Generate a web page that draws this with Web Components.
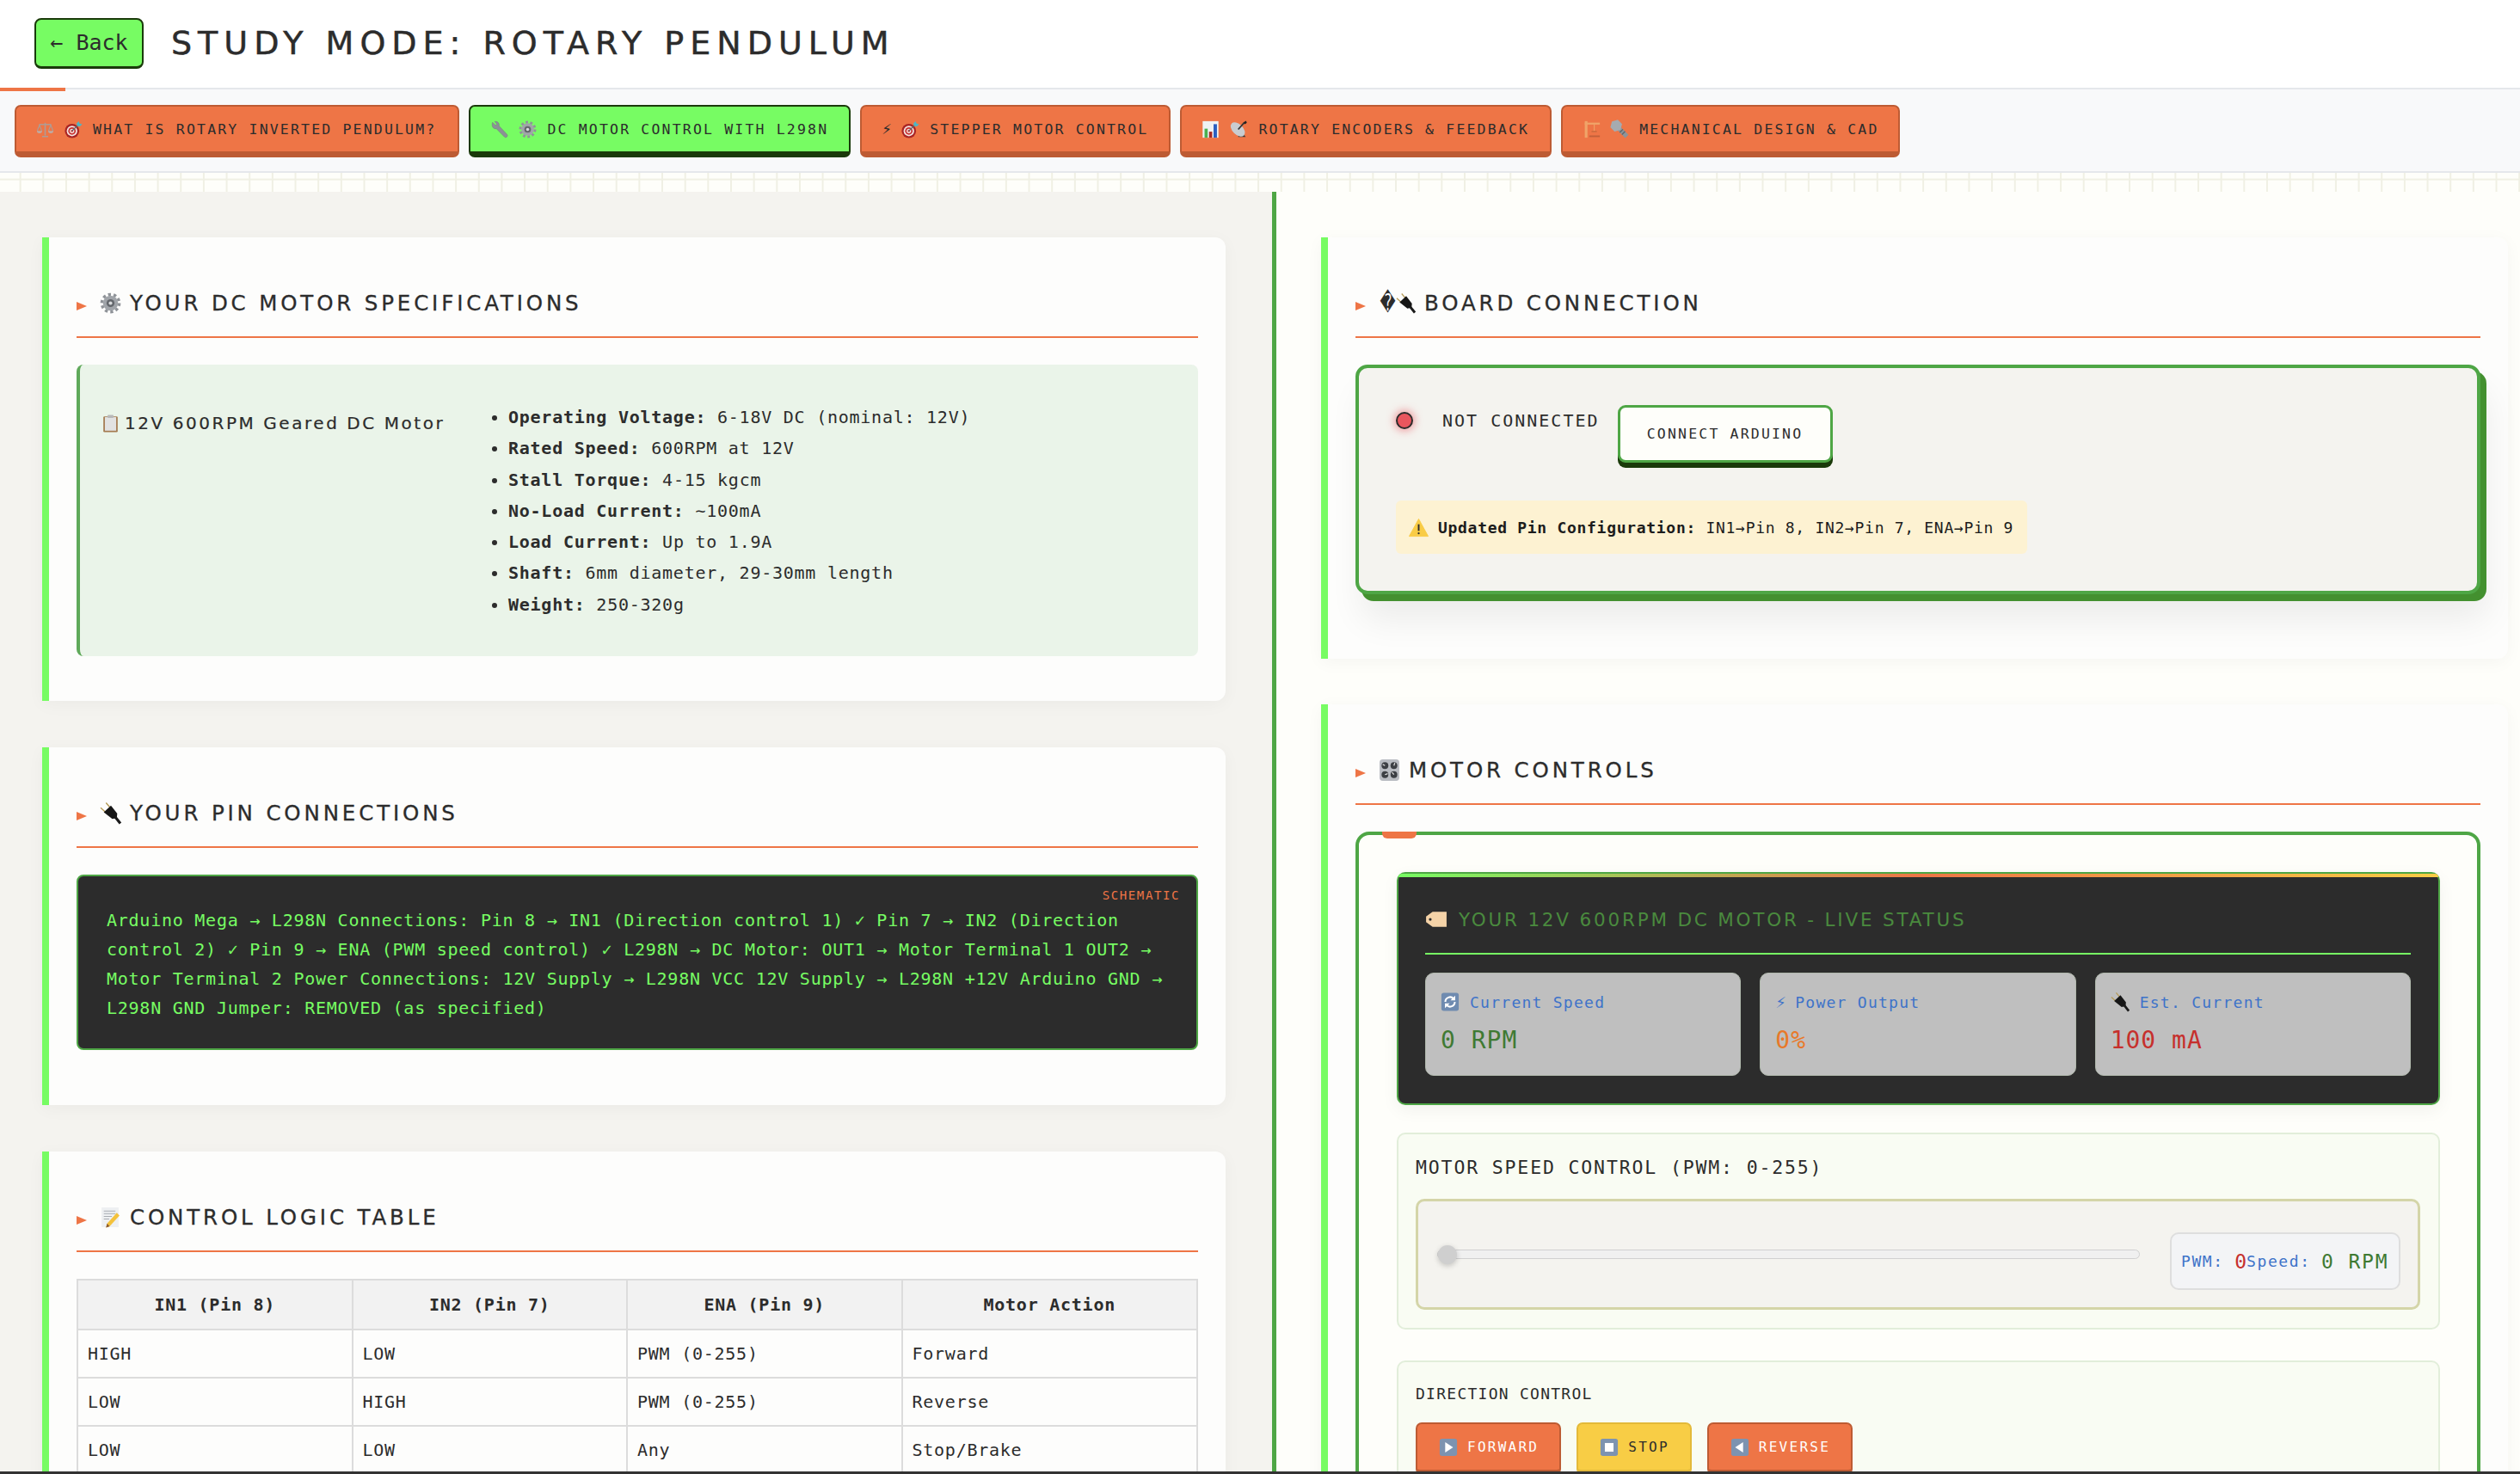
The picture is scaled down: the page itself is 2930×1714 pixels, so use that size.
<!DOCTYPE html>
<html lang="en">
<head>
<meta charset="utf-8">
<title>Study Mode: Rotary Pendulum</title>
<style>
  html, body { margin: 0; padding: 0; }
  body {
    height: 1714px;
    overflow: hidden;
    background: #fefefa;
    color: #2c2c2c;
    font-family: "DejaVu Sans Mono", "Liberation Mono", monospace;
    --display: "DejaVu Sans", "Liberation Sans", sans-serif;
    --green: #77fc63;
    --green-mid: #4ea645;
    --green-dark: #1a3a0a;
    --orange: #ee7546;
    --orange-dark: #bd5b33;
  }
</style>
</head>
<body>
<study-page>
  <study-header slot="header" title="STUDY MODE: ROTARY PENDULUM"></study-header>
  <tab-bar slot="tabs">
    <study-tab style="padding-right:25px"><emoji-icon name="scales"></emoji-icon><emoji-icon name="dart"></emoji-icon>WHAT IS ROTARY INVERTED PENDULUM?</study-tab>
    <study-tab active><emoji-icon name="wrench"></emoji-icon><emoji-icon name="gear"></emoji-icon>DC MOTOR CONTROL WITH L298N</study-tab>
    <study-tab><span class="bolt">⚡</span><emoji-icon name="dart"></emoji-icon>STEPPER MOTOR CONTROL</study-tab>
    <study-tab><emoji-icon name="chart"></emoji-icon><emoji-icon name="dish"></emoji-icon>ROTARY ENCODERS &amp; FEEDBACK</study-tab>
    <study-tab style="padding-right:22px"><emoji-icon name="crane"></emoji-icon><emoji-icon name="nutbolt"></emoji-icon>MECHANICAL DESIGN &amp; CAD</study-tab>
  </tab-bar>

  <study-card slot="left">
    <emoji-icon slot="icon" name="gear" size="25"></emoji-icon>
    <span slot="title">YOUR DC MOTOR SPECIFICATIONS</span>
    <spec-box></spec-box>
  </study-card>
  <study-card slot="left">
    <emoji-icon slot="icon" name="plug" size="25"></emoji-icon>
    <span slot="title">YOUR PIN CONNECTIONS</span>
    <schematic-box></schematic-box>
  </study-card>
  <study-card slot="left">
    <emoji-icon slot="icon" name="memo" size="25"></emoji-icon>
    <span slot="title">CONTROL LOGIC TABLE</span>
    <logic-table></logic-table>
  </study-card>

  <study-card slot="right">
    <span slot="icon" style="display:inline-block;width:16px;text-align:center;font-size:22px;font-family:'DejaVu Sans',sans-serif;letter-spacing:0;line-height:1;transform:scale(.8,1.25)">&#xFFFD;</span>
    <emoji-icon slot="icon" name="plug" size="23"></emoji-icon>
    <span slot="title">BOARD CONNECTION</span>
    <board-panel></board-panel>
  </study-card>
  <study-card slot="right">
    <emoji-icon slot="icon" name="knobs" size="25"></emoji-icon>
    <span slot="title">MOTOR CONTROLS</span>
    <motor-panel></motor-panel>
  </study-card>
</study-page>

<script>
const ICONS = {
  scales: `<g fill="none" stroke="#a3a3a3" stroke-width="1.3" opacity=".85"><path d="M12 3v17M4 5.5h16M8 21.5h8" stroke-width="1.8"/><path d="M4.5 6 1.5 14M4.5 6l3 8M19.5 6l-3 8M19.5 6l3 8"/></g><path d="M1 14h7a3.5 3 0 0 1-7 0zM16 14h7a3.5 3 0 0 1-7 0z" fill="#b5b5b5" opacity=".85"/>`,
  dart: `<circle cx="10" cy="14" r="9.5" fill="#a82424"/><circle cx="10" cy="14" r="7" fill="#f3e3e0"/><circle cx="10" cy="14" r="5" fill="#c9302f"/><circle cx="10" cy="14" r="3" fill="#f3e3e0"/><circle cx="10" cy="14" r="1.4" fill="#c9302f"/><path d="M10 14 19 5" stroke="#5a6a70" stroke-width="1.5"/><path d="M16 4l3-3 1 3 3.5 1-3 3-3.5-.5z" fill="#4fb5c4"/>`,
  wrench: `<path d="M3 2.5 7 6.5 9 5 6 1.6C9.5.7 12.5 3.5 11.8 7.4L22.3 18.6a2.4 2.4 0 0 1-3.6 3.2L8.2 11C4.2 11.8 1.2 8 3 2.5z" fill="#8b9196" stroke="#6d7277" stroke-width=".5"/>`,
  gear: `<circle cx="12" cy="12" r="9.7" fill="none" stroke="#8f9398" stroke-width="3.4" stroke-dasharray="3.2 2.9"/><circle cx="12" cy="12" r="8.4" fill="#a0a4a9"/><circle cx="12" cy="12" r="4.4" fill="#63676c"/><circle cx="12" cy="12" r="2" fill="#d8dadc"/>`,
  chart: `<rect x="1.5" y="1" width="21" height="22" fill="#eef2f4"/><rect x="4" y="11" width="4.2" height="12" fill="#4caf50"/><rect x="10" y="15" width="4.2" height="8" fill="#a82a22"/><rect x="16" y="5" width="4.5" height="18" fill="#2b5fc0"/>`,
  dish: `<path d="M13 12 21 22H11z" fill="#3a3a3a"/><ellipse cx="10.5" cy="12" rx="11.5" ry="7" transform="rotate(45 10.5 12)" fill="#c9ccd0"/><path d="M11 12 19 3" stroke="#333" stroke-width="2"/><path d="M18 2.5l3.5-2 1 2.5-2.5 2z" fill="#222"/>`,
  crane: `<g fill="#f0a469"><rect x="3" y="1" width="3.6" height="22"/><rect x="3" y="3" width="20" height="2.6"/><rect x="15" y="5" width="1.2" height="9"/></g><rect x="12" y="14" width="7" height="1.6" fill="#c8693c"/><rect x="9" y="20" width="14" height="2.2" fill="#c2603a"/>`,
  nutbolt: `<g transform="rotate(-45 12 12)"><rect x="9" y="9" width="6" height="16" fill="#8e9499"/><path d="M12-3l7 4v8l-7 4-7-4V1z" fill="#a6abb0"/><rect x="9" y="14" width="6" height="1.4" fill="#5f6468"/><rect x="9" y="18" width="6" height="1.4" fill="#5f6468"/></g>`,
  plug: `<path d="M7 .5 12.5 7M1 6l6 5.500" stroke="#b59a55" stroke-width="1.300"/><path d="M4.500 11 12.500 3.500 19.500 12.500 19 17.500 14 18.500z" fill="#161616"/><path d="M17 16 23 23.500" stroke="#1a1a1a" stroke-width="3"/>`,
  clipboard: `<rect x="2.5" y="2.5" width="19" height="21" rx="1.5" fill="#a47a50"/><rect x="4.5" y="3.5" width="15" height="18" fill="#e2e2e2"/><rect x="8" y="0.5" width="8" height="4" rx="1" fill="#b8b8b8"/>`,
  memo: `<rect x="2" y="1" width="19" height="22" fill="#eef0f2"/><path d="M4.5 5h13M4.5 8h13M4.5 11h9M4.5 14h6" stroke="#a8acb2" stroke-width="1"/><path d="M19 7l3 3L11 22l-4 1.4L8.2 19z" fill="#f4c23c"/><path d="M8.2 19l-1.2 4.4 4-1.4z" fill="#8a5a35"/>`,
  knobs: `<rect x="1" y="0" width="22" height="24" rx="3.5" fill="#b9bcc2"/><g fill="#3c3f44"><circle cx="7" cy="7" r="3.8"/><circle cx="17" cy="7" r="3.8"/><circle cx="7" cy="17" r="3.8"/><circle cx="17" cy="17" r="3.8"/></g><path d="M7 7 4.5 5.5M17 7l1-3M7 17l3-1M17 17l-2-2.500" stroke="#e6e6e6" stroke-width="1.100"/>`,
  tag: `<path d="M8 4h15v16H8L1 15V9z" fill="#f5d3a8"/><circle cx="5.500" cy="12" r="1.500" fill="#2c2c2c"/>`,
  refresh: `<rect x="1" y="0.500" width="22" height="23" rx="3" fill="#6f8bb0"/><path d="M6 12a6 6 0 0 1 10.500-4M18 12a6 6 0 0 1-10.500 4" fill="none" stroke="#fff" stroke-width="2.200"/><path d="M18.500 4v6h-6zM5.500 20v-6h6z" fill="#fff"/>`,
  play: `<rect x="1" y="1" width="22" height="22" rx="3" fill="#7d93b0"/><path d="M8 5.500 18 12 8 18.500z" fill="#fff"/>`,
  stop: `<rect x="1" y="1" width="22" height="22" rx="3" fill="#7d93b0"/><rect x="6.500" y="6.500" width="11" height="11" fill="#fff"/>`,
  back: `<rect x="1" y="1" width="22" height="22" rx="3" fill="#7d93b0"/><path d="M16 5.500 6 12l10 6.500z" fill="#fff"/>`,
  warn: `<path d="M12 1.500 23.500 22.500H.5z" fill="#f9cc46" stroke="#f9cc46" stroke-linejoin="round"/><path d="M12 8v8" stroke="#2c2c2c" stroke-width="2"/><circle cx="12" cy="19" r="1.200" fill="#2c2c2c"/>`
};

class EmojiIcon extends HTMLElement {
  connectedCallback() {
    const size = this.getAttribute("size") || 21;
    this.attachShadow({ mode: "open" }).innerHTML = `
<style>:host { display: inline-flex; flex: none; width: ${size}px; height: ${size}px; } svg { width: 100%; height: 100%; overflow: visible; }</style>
<svg viewBox="0 0 24 24" aria-hidden="true">${ICONS[this.getAttribute("name")] || ""}</svg>`;
  }
}

class StudyPage extends HTMLElement {
  constructor() {
    super();
    this.attachShadow({ mode: "open" }).innerHTML = `
<style>
:host { display: flex; flex-direction: column; height: 1714px; overflow: hidden; position: relative; }
.grid {
  height: 22px; flex: none;
  background-color: #fefefa;
  background-image: linear-gradient(#f0f0e4 2px, transparent 2px), linear-gradient(90deg, #f0f0e4 2px, transparent 2px);
  background-size: 26.67px 26.67px;
  background-position: -4px -20px;
}
main { flex: 1; min-height: 0; display: grid; grid-template-columns: 1479px 1fr; overflow: hidden; }
.left { background: #f4f3ef; padding: 53px 54px 0 49px; display: flex; flex-direction: column; gap: 54px; }
.right { background: #fefefa; border-left: 5px solid var(--green-mid); padding: 53px 14px 0 52px; display: flex; flex-direction: column; gap: 53px; }
.edge { height: 3px; flex: none; background: #333; }
</style>
<slot name="header"></slot>
<slot name="tabs"></slot>
<div class="grid"></div>
<main>
  <section class="left"><slot name="left"></slot></section>
  <section class="right"><slot name="right"></slot></section>
</main>
<div class="edge"></div>`;
  }
}

class StudyHeader extends HTMLElement {
  constructor() {
    super();
    this.attachShadow({ mode: "open" }).innerHTML = `
<style>
:host { display: flex; align-items: center; gap: 32px; height: 100px; padding-left: 40px; padding-bottom: 2px; background: #fff; position: relative; border-bottom: 2px solid #e5e7eb; }
:host::after { content: ""; position: absolute; left: 0; bottom: -4px; width: 76px; height: 4px; background: var(--orange); }
a { width: 127px; height: 59px; box-sizing: border-box; display: flex; align-items: center; justify-content: center; background: var(--green); border: 2px solid var(--green-dark); border-bottom-width: 3px; border-radius: 8px; font-size: 25px; color: #2c2c2c; }
h1 { margin: 0; font: 400 38px var(--display); letter-spacing: 7px; -webkit-text-stroke: .5px #2c2c2c; color: #2c2c2c; white-space: nowrap; }
</style>
<a>← Back</a>
<h1></h1>`;
    this.shadowRoot.querySelector("h1").textContent = this.getAttribute("title");
  }
}

class TabBar extends HTMLElement {
  constructor() {
    super();
    this.attachShadow({ mode: "open" }).innerHTML = `
<style>
:host { display: flex; gap: 11px; padding: 18px 17px 16px; background: #f8f9fa; border-bottom: 2px solid #e5e7eb; }
</style>
<slot></slot>`;
  }
}

class StudyTab extends HTMLElement {
  constructor() {
    super();
    this.attachShadow({ mode: "open" }).innerHTML = `
<style>
:host { display: flex; align-items: center; gap: 12px; height: 61px; box-sizing: border-box; padding: 0 24px 0 23px; white-space: nowrap; background: var(--orange); border: 2px solid var(--orange-dark); border-bottom-width: 7px; border-radius: 7px; font-size: 16.5px; letter-spacing: 2.17px; color: #2c2c2c; }
:host([active]) { background: var(--green); border-color: var(--green-dark); }
::slotted(.bolt) { font-family: "DejaVu Sans", sans-serif; letter-spacing: 0; width: 11px; text-align: center; }
</style>
<slot></slot>`;
  }
}

class StudyCard extends HTMLElement {
  constructor() {
    super();
    this.attachShadow({ mode: "open" }).innerHTML = `
<style>
:host { display: block; flex: none; background: #fdfdfc; border-left: 8px solid var(--green); border-radius: 0 12px 12px 0; padding: 52px 32px; box-shadow: 0 4px 20px rgba(0,0,0,.04); }
h2 { margin: 0 0 31px; height: 65px; box-sizing: border-box; padding-bottom: 15px; display: flex; align-items: center; border-bottom: 2px solid var(--orange); font: 400 24.5px var(--display); letter-spacing: 3.850px; -webkit-text-stroke: .3px #2c2c2c; color: #2c2c2c; white-space: nowrap; }
h2::before { content: ""; width: 0; height: 0; border-left: 12px solid var(--orange); border-top: 5.500px solid transparent; border-bottom: 5.500px solid transparent; margin: 7px 15px 0 0; }
.icons { display: inline-flex; align-items: center; gap: 4px; margin-right: 10px; -webkit-text-stroke: 0; }
</style>
<h2><span class="icons"><slot name="icon"></slot></span><slot name="title"></slot></h2>
<slot></slot>`;
  }
}

class SpecBox extends HTMLElement {
  constructor() {
    super();
    const rows = [
      ["Operating Voltage:", "6-18V DC (nominal: 12V)"],
      ["Rated Speed:", "600RPM at 12V"],
      ["Stall Torque:", "4-15 kgcm"],
      ["No-Load Current:", "~100mA"],
      ["Load Current:", "Up to 1.9A"],
      ["Shaft:", "6mm diameter, 29-30mm length"],
      ["Weight:", "250-320g"]
    ];
    this.attachShadow({ mode: "open" }).innerHTML = `
<style>
:host { display: flex; height: 339px; box-sizing: border-box; background: #eaf4e9; border-left: 4px solid #5fa95a; border-radius: 8px; padding: 43px 25px 0; }
h3 { margin: 10px 0 0; width: 455px; height: 30px; flex: none; display: flex; align-items: center; gap: 6px; font: 400 20px var(--display); letter-spacing: 2.550px; -webkit-text-stroke: .2px #2c2c2c; color: #2c2c2c; white-space: nowrap; }
ul { margin: 0; padding: 0 0 0 18px; list-style: disc; font-size: 20px; letter-spacing: .750px; line-height: 36.300px; color: #2c2c2c; }
b { font-weight: 700; }
</style>
<h3><emoji-icon name="clipboard" size="21"></emoji-icon>12V 600RPM Geared DC Motor</h3>
<ul>${rows.map(([k, v]) => `<li><b>${k}</b> ${v}</li>`).join("")}</ul>`;
  }
}

class SchematicBox extends HTMLElement {
  constructor() {
    super();
    this.attachShadow({ mode: "open" }).innerHTML = `
<style>
:host { display: block; position: relative; height: 204px; box-sizing: border-box; background: #2c2c2c; border: 2px solid var(--green-mid); border-radius: 8px; padding: 34px 0 0 33px; margin-bottom: 12px; font-size: 20px; letter-spacing: .750px; line-height: 34px; color: var(--green); white-space: nowrap; }
span { position: absolute; right: 19px; top: 12px; font-size: 14px; line-height: 20px; letter-spacing: 1.600px; color: var(--orange); }
</style>
<span>SCHEMATIC</span>
Arduino Mega → L298N Connections: Pin 8 → IN1 (Direction control 1) ✓ Pin 7 → IN2 (Direction<br>
control 2) ✓ Pin 9 → ENA (PWM speed control) ✓ L298N → DC Motor: OUT1 → Motor Terminal 1 OUT2 →<br>
Motor Terminal 2 Power Connections: 12V Supply → L298N VCC 12V Supply → L298N +12V Arduino GND →<br>
L298N GND Jumper: REMOVED (as specified)`;
  }
}

class LogicTable extends HTMLElement {
  constructor() {
    super();
    const head = ["IN1 (Pin 8)", "IN2 (Pin 7)", "ENA (Pin 9)", "Motor Action"];
    const body = [
      ["HIGH", "LOW", "PWM (0-255)", "Forward"],
      ["LOW", "HIGH", "PWM (0-255)", "Reverse"],
      ["LOW", "LOW", "Any", "Stop/Brake"]
    ];
    this.attachShadow({ mode: "open" }).innerHTML = `
<style>
:host { display: block; font-size: 20px; letter-spacing: .750px; color: #2c2c2c; }
table { width: 100%; border-collapse: collapse; table-layout: fixed; }
th, td { border: 2px solid #dcdcdc; padding: 0 11px; box-sizing: border-box; }
th { height: 58px; background: #f2f2f2; font-weight: 700; text-align: center; }
td { height: 56px; text-align: left; }
col.n { width: 319.500px; }
</style>
<table>
  <colgroup><col class="n"><col class="n"><col class="n"><col></colgroup>
  <thead><tr>${head.map((h) => `<th>${h}</th>`).join("")}</tr></thead>
  <tbody>${body.map((r) => `<tr>${r.map((c) => `<td>${c}</td>`).join("")}</tr>`).join("")}</tbody>
</table>`;
  }
}

class BoardPanel extends HTMLElement {
  constructor() {
    super();
    this.attachShadow({ mode: "open" }).innerHTML = `
<style>
:host { display: block; height: 267px; box-sizing: border-box; background: #f4f3ef; border: 4px solid var(--green-mid); border-radius: 14px; box-shadow: 7px 8px 0 #43902f, 8px 30px 40px rgba(0,0,0,.07); padding: 43px 0 0 43px; margin-bottom: 23px; }
.row { display: flex; align-items: flex-start; }
i { width: 16px; height: 16px; margin-top: 8px; border: 2px solid #2c2c2c; border-radius: 50%; background: #e9565e; box-shadow: 0 0 10px 2px rgba(233,86,94,.55); flex: none; }
.state { margin-left: 34px; line-height: 36px; font-size: 20px; letter-spacing: 2px; }
button { margin-left: 21px; width: 250px; height: 67px; box-sizing: border-box; background: #fefefa; border: 3px solid var(--green-mid); border-radius: 9px; box-shadow: 0 6px 0 var(--green-dark); font: 400 16.500px "DejaVu Sans Mono", monospace; letter-spacing: 2.170px; color: #2c2c2c; }
p { display: inline-flex; align-items: center; gap: 11px; margin: 44px 0 0; height: 62px; box-sizing: border-box; padding: 0 16px 0 15px; background: #fdf2d2; border-radius: 6px; font-size: 18px; letter-spacing: .700px; white-space: nowrap; color: #1c1c1c; }
</style>
<div class="row"><i></i><span class="state">NOT CONNECTED</span><button>CONNECT ARDUINO</button></div>
<p><emoji-icon name="warn" size="23"></emoji-icon><span><b>Updated Pin Configuration:</b> IN1→Pin 8, IN2→Pin 7, ENA→Pin 9</span></p>`;
  }
}

class StatTile extends HTMLElement {
  constructor() {
    super();
    this.attachShadow({ mode: "open" }).innerHTML = `
<style>
:host { display: block; height: 120px; box-sizing: border-box; padding: 18px 0 0 17px; background: #bfbfbf; border: 1px solid #b0b8ac; border-radius: 10px; }
.l { display: flex; align-items: center; gap: 12px; height: 30px; font-size: 18px; letter-spacing: 1.260px; color: #3e73c9; white-space: nowrap; }
.v { margin-top: 15px; height: 30px; line-height: 30px; font-size: 28px; letter-spacing: 1px; color: var(--c); white-space: nowrap; }
::slotted(.bolt) { font-family: "DejaVu Sans", sans-serif; margin-right: -3px; }
</style>
<div class="l"><slot name="icon"></slot><slot name="label"></slot></div>
<div class="v"><slot></slot></div>`;
  }
}

class MotorPanel extends HTMLElement {
  constructor() {
    super();
    this.attachShadow({ mode: "open" }).innerHTML = `
<style>
:host { display: block; position: relative; box-sizing: border-box; background: #fefefa; border: 4px solid var(--green-mid); border-radius: 16px; padding: 43px 43px 0 44px; }
.stub { position: absolute; left: 27px; top: -4px; width: 40px; height: 8px; background: var(--orange); border-radius: 0 0 6px 6px; }
.status { position: relative; height: 271px; box-sizing: border-box; background: #2c2c2c; border: 2px solid var(--green-mid); border-radius: 10px; padding: 38px 32px 0 31px; box-shadow: 0 6px 20px rgba(0,0,0,.05); }
.status::before { content: ""; position: absolute; left: 0; right: 0; top: 0; height: 4px; border-radius: 8px 8px 0 0; background: linear-gradient(90deg, var(--green), var(--orange) 50%, #f8cd45); }
h3 { margin: 0 0 21px; height: 56px; box-sizing: border-box; padding-bottom: 24px; border-bottom: 2px solid var(--green); display: flex; align-items: center; gap: 13px; font: 400 21.500px var(--display); letter-spacing: 2.800px; color: #4a8a3e; white-space: nowrap; }
.stats { display: grid; grid-template-columns: repeat(3, 1fr); gap: 22px; }
.sect { background: #f9fcf3; border: 2px solid #e2eeda; border-radius: 10px; padding: 0 21px 0 20px; box-sizing: border-box; }
.speed { height: 229px; margin-top: 32px; padding-top: 24px; }
.cap { font-size: 21.500px; line-height: 30px; letter-spacing: 1.850px; font-weight: 400; }
.slider { display: flex; align-items: center; height: 129px; box-sizing: border-box; margin-top: 21px; padding: 0 20px 0 22px; background: #f4f3ef; border: 3px solid #d4d5a8; border-radius: 10px; }
input { -webkit-appearance: none; appearance: none; margin: 0; width: 817px; height: 22px; background: transparent; flex: none; }
input::-webkit-slider-runnable-track { height: 11px; box-sizing: border-box; background: #f0f0f0; border: 1px solid #d0d0d0; border-radius: 6px; }
input::-webkit-slider-thumb { -webkit-appearance: none; width: 22px; height: 22px; margin-top: -6px; border-radius: 50%; background: #cfcfcf; box-shadow: 0 2px 6px rgba(0,0,0,.2); }
.val { margin: 16px 0 0 35px; flex: 1; height: 67px; box-sizing: border-box; padding-left: 11px; display: flex; align-items: center; white-space: nowrap; background: #f3f4f6; border: 2px solid #dedede; border-radius: 10px; font-size: 18px; letter-spacing: 1.600px; color: #3e73c9; }
.val b { font-weight: 400; font-size: 23px; letter-spacing: 0; color: #c6302d; }
.val em { font-style: normal; font-size: 23px; letter-spacing: 1.800px; color: #3f7a33; }
.dir { margin-top: 36px; height: 300px; padding-top: 22px; }
.dir .cap { font-size: 18px; letter-spacing: 1.260px; }
.btns { display: flex; gap: 18px; margin-top: 18px; }
</style>
<div class="stub"></div>
<div class="status">
  <h3><emoji-icon name="tag" size="26"></emoji-icon>YOUR 12V 600RPM DC MOTOR - LIVE STATUS</h3>
  <div class="stats">
    <stat-tile style="--c:#3f7a33"><emoji-icon slot="icon" name="refresh" size="22"></emoji-icon><span slot="label">Current Speed</span>0 RPM</stat-tile>
    <stat-tile style="--c:#e8792a"><span slot="icon" class="bolt">⚡</span><span slot="label">Power Output</span>0%</stat-tile>
    <stat-tile style="--c:#c6302d"><emoji-icon slot="icon" name="plug" size="22"></emoji-icon><span slot="label">Est. Current</span>100 mA</stat-tile>
  </div>
</div>
<div class="sect speed">
  <div class="cap">MOTOR SPEED CONTROL (PWM: 0-255)</div>
  <div class="slider">
    <input type="range" min="0" max="255" value="0">
    <div class="val">PWM:&nbsp;<b>0</b>Speed:&nbsp;<em>0 RPM</em></div>
  </div>
</div>
<div class="sect dir">
  <div class="cap">DIRECTION CONTROL</div>
  <div class="btns">
    <dir-button kind="go"><emoji-icon slot="icon" name="play" size="22"></emoji-icon>FORWARD</dir-button>
    <dir-button kind="halt"><emoji-icon slot="icon" name="stop" size="22"></emoji-icon>STOP</dir-button>
    <dir-button kind="go"><emoji-icon slot="icon" name="back" size="22"></emoji-icon>REVERSE</dir-button>
  </div>
</div>`;
  }
}

class DirButton extends HTMLElement {
  constructor() {
    super();
    this.attachShadow({ mode: "open" }).innerHTML = `
<style>
:host { display: flex; align-items: center; gap: 11px; height: 61px; box-sizing: border-box; padding: 0 24px 0 25px; background: var(--orange); border: 2px solid var(--orange-dark); border-bottom-width: 6px; border-radius: 7px; font-size: 16px; letter-spacing: 2.260px; color: #fff; white-space: nowrap; }
:host([kind="halt"]) { background: #f8cd45; border-color: #e3b93a; color: #2c2c2c; }
</style>
<slot name="icon"></slot><slot></slot>`;
  }
}

customElements.define("emoji-icon", EmojiIcon);
customElements.define("study-header", StudyHeader);
customElements.define("tab-bar", TabBar);
customElements.define("study-tab", StudyTab);
customElements.define("study-card", StudyCard);
customElements.define("spec-box", SpecBox);
customElements.define("schematic-box", SchematicBox);
customElements.define("logic-table", LogicTable);
customElements.define("board-panel", BoardPanel);
customElements.define("stat-tile", StatTile);
customElements.define("dir-button", DirButton);
customElements.define("motor-panel", MotorPanel);
customElements.define("study-page", StudyPage);
</script>
</body>
</html>
